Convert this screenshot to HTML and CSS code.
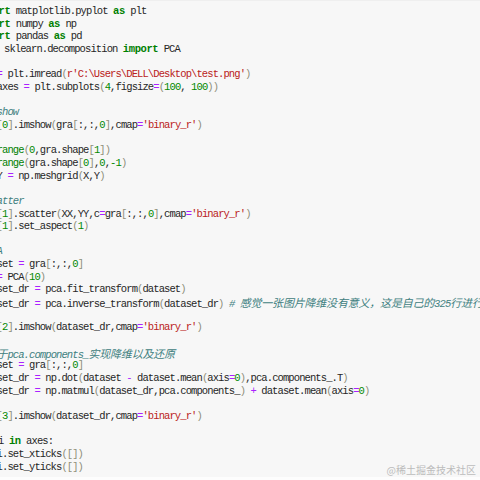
FILE: index.html
```html
<!DOCTYPE html>
<html lang="zh">
<head>
<meta charset="utf-8">
<title>PCA code</title>
<link rel="stylesheet" href="styles.css">
</head>
<body>
<div class="cell">
  <div class="code">
    <div class="ln"><span class="k">import</span> matplotlib.pyplot <span class="k">as</span> plt</div>
    <div class="ln"><span class="k">import</span> numpy <span class="k">as</span> np</div>
    <div class="ln"><span class="k">import</span> pandas <span class="k">as</span> pd</div>
    <div class="ln"><span class="k">from</span> sklearn.decomposition <span class="k">import</span> PCA</div>
    <div class="ln"> </div>
    <div class="ln">gra <span class="o">=</span> plt.imread<span class="p">(</span><span class="s">r'C:\Users\DELL\Desktop\test.png'</span><span class="p">)</span></div>
    <div class="ln">fig,axes <span class="o">=</span> plt.subplots<span class="p">(</span><span class="n">4</span>,figsize<span class="o">=</span><span class="p">(</span><span class="n">100</span>, <span class="n">100</span><span class="p">))</span></div>
    <div class="ln"> </div>
    <div class="ln"><span class="c"># imshow</span></div>
    <div class="ln">axes<span class="p">[</span><span class="n">0</span><span class="p">]</span>.imshow<span class="p">(</span>gra<span class="p">[</span>:,:,<span class="n">0</span><span class="p">]</span>,cmap<span class="o">=</span><span class="s">'binary_r'</span><span class="p">)</span></div>
    <div class="ln"> </div>
    <div class="ln">X <span class="o">=</span> <span class="b">range</span><span class="p">(</span><span class="n">0</span>,gra.shape<span class="p">[</span><span class="n">1</span><span class="p">])</span></div>
    <div class="ln">Y <span class="o">=</span> <span class="b">range</span><span class="p">(</span>gra.shape<span class="p">[</span><span class="n">0</span><span class="p">]</span>,<span class="n">0</span>,<span class="n">-1</span><span class="p">)</span></div>
    <div class="ln">XX,YY <span class="o">=</span> np.meshgrid<span class="p">(</span>X,Y<span class="p">)</span></div>
    <div class="ln"> </div>
    <div class="ln"><span class="c"># scatter</span></div>
    <div class="ln">axes<span class="p">[</span><span class="n">1</span><span class="p">]</span>.scatter<span class="p">(</span>XX,YY,c<span class="o">=</span>gra<span class="p">[</span>:,:,<span class="n">0</span><span class="p">]</span>,cmap<span class="o">=</span><span class="s">'binary_r'</span><span class="p">)</span></div>
    <div class="ln">axes<span class="p">[</span><span class="n">1</span><span class="p">]</span>.set_aspect<span class="p">(</span><span class="n">1</span><span class="p">)</span></div>
    <div class="ln"> </div>
    <div class="ln"><span class="c"># PCA</span></div>
    <div class="ln">dataset <span class="o">=</span> gra<span class="p">[</span>:,:,<span class="n">0</span><span class="p">]</span></div>
    <div class="ln">pca <span class="o">=</span> PCA<span class="p">(</span><span class="n">10</span><span class="p">)</span></div>
    <div class="ln">dataset_dr <span class="o">=</span> pca.fit_transform<span class="p">(</span>dataset<span class="p">)</span></div>
    <div class="ln">dataset_dr <span class="o">=</span> pca.inverse_transform<span class="p">(</span>dataset_dr<span class="p">)</span> <span class="c"># <span class="j">感觉一张图片降维没有意义，这是自己的</span>325<span class="j">行进行降维的尝试</span></span></div>
    <div class="ln"> </div>
    <div class="ln">axes<span class="p">[</span><span class="n">2</span><span class="p">]</span>.imshow<span class="p">(</span>dataset_dr,cmap<span class="o">=</span><span class="s">'binary_r'</span><span class="p">)</span></div>
    <div class="ln"> </div>
    <div class="ln"><span class="c"># <span class="j">基于</span>pca.components_<span class="j">实现降维以及还原</span></span></div>
    <div class="ln">dataset <span class="o">=</span> gra<span class="p">[</span>:,:,<span class="n">0</span><span class="p">]</span></div>
    <div class="ln">dataset_dr <span class="o">=</span> np.dot<span class="p">(</span>dataset <span class="o">-</span> dataset.mean<span class="p">(</span>axis<span class="o">=</span><span class="n">0</span><span class="p">)</span>,pca.components_.T<span class="p">)</span></div>
    <div class="ln">dataset_dr <span class="o">=</span> np.matmul<span class="p">(</span>dataset_dr,pca.components_<span class="p">)</span> <span class="o">+</span> dataset.mean<span class="p">(</span>axis<span class="o">=</span><span class="n">0</span><span class="p">)</span></div>
    <div class="ln"> </div>
    <div class="ln">axes<span class="p">[</span><span class="n">3</span><span class="p">]</span>.imshow<span class="p">(</span>dataset_dr,cmap<span class="o">=</span><span class="s">'binary_r'</span><span class="p">)</span></div>
    <div class="ln"> </div>
    <div class="ln"><span class="k">for</span> i <span class="k">in</span> axes:</div>
    <div class="ln">    i.set_xticks<span class="p">([])</span></div>
    <div class="ln">    i.set_yticks<span class="p">([])</span></div>
  </div>
  <div class="mark">@稀土掘金技术社区</div>
</div>
</body>
</html>
```
FILE: styles.css
```css
html, body {
  margin: 0;
  padding: 0;
  width: 480px;
  height: 480px;
  overflow: hidden;
  background: #fdfdfd;
}

.cell {
  position: relative;
  height: 477px;
  box-sizing: border-box;
  background: #f7f7f7;
  border-top: 1px solid #efefef;
  overflow: hidden;
}

.code {
  padding-top: 4px;
  margin-left: -25px;
  font-family: "Liberation Mono", "Noto Sans CJK SC", monospace;
  font-size: 10.5px;
  letter-spacing: -0.9px;
  color: #262626;
}

.ln {
  height: 12.67px;
  line-height: 12.67px;
  white-space: pre;
  overflow: visible;
}

.k {
  color: #008000;
  font-weight: bold;
  letter-spacing: -0.4px;
}

.b {
  color: #008000;
}

.n {
  color: #008800;
}

.o {
  color: #aa22ff;
}

.s {
  color: #ba2121;
}

.p {
  color: #8f8f7a;
}

.c {
  color: #408080;
  font-style: italic;
}

.j {
  font-family: "Noto Sans CJK SC", sans-serif;
  font-size: 11px;
  letter-spacing: -0.2px;
}

.mark {
  position: absolute;
  right: 4px;
  bottom: 1px;
  font-family: "Noto Sans CJK SC", sans-serif;
  font-size: 10px;
  line-height: 12px;
  color: #bcbcbc;
}
```
